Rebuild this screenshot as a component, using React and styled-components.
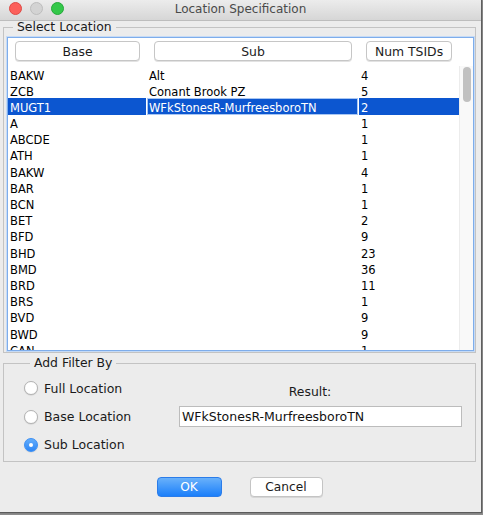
import React from "react";
import styled, { createGlobalStyle } from "styled-components";

const rows = [
  ["BAKW", "Alt", "4"],
  ["ZCB", "Conant Brook PZ", "5"],
  ["MUGT1", "WFkStonesR-MurfreesboroTN", "2"],
  ["A", "", "1"],
  ["ABCDE", "", "1"],
  ["ATH", "", "1"],
  ["BAKW", "", "4"],
  ["BAR", "", "1"],
  ["BCN", "", "1"],
  ["BET", "", "2"],
  ["BFD", "", "9"],
  ["BHD", "", "23"],
  ["BMD", "", "36"],
  ["BRD", "", "11"],
  ["BRS", "", "1"],
  ["BVD", "", "9"],
  ["BWD", "", "9"],
  ["CAN", "", "1"],
];

const options = ["Full Location", "Base Location", "Sub Location"];

const App = () => {
  return (
    <>
      <GlobalStyle />
      <Desktop>
        <Window>
          <TitleBar>
            <Lights>
              <Light color="#fc605b" edge="#de4a45" />
              <Light color="#d3d3d3" edge="#bdbdbd" />
              <Light color="#34c84a" edge="#25a83a" />
            </Lights>
            <Title>Location Specification</Title>
          </TitleBar>

          <Group>
            <Legend>Select Location</Legend>
            <TableBox>
              <HeaderRow>
                <HeadButton>Base</HeadButton>
                <HeadButton>Sub</HeadButton>
                <HeadButton>Num TSIDs</HeadButton>
              </HeaderRow>
              <Body>
                <Rows>
                  {rows.map((r, i) => (
                    <Row key={i} selected={i === 2}>
                      <Cell>{r[0]}</Cell>
                      <Cell focused={i === 2}>{r[1]}</Cell>
                      <Cell>{r[2]}</Cell>
                    </Row>
                  ))}
                </Rows>
                <ScrollTrack>
                  <Thumb />
                </ScrollTrack>
              </Body>
            </TableBox>
          </Group>

          <FilterGroup>
            <Legend>Add Filter By</Legend>
            <FilterBody>
              <Radios>
                {options.map((o) => (
                  <RadioRow key={o}>
                    <Radio checked={o === "Sub Location"} />
                    <span>{o}</span>
                  </RadioRow>
                ))}
              </Radios>
              <ResultPane>
                <ResultLabel>Result:</ResultLabel>
                <ResultField>WFkStonesR-MurfreesboroTN</ResultField>
              </ResultPane>
            </FilterBody>
          </FilterGroup>

          <Buttons>
            <OkButton>OK</OkButton>
            <CancelButton>Cancel</CancelButton>
          </Buttons>
        </Window>
      </Desktop>
    </>
  );
};

const GlobalStyle = createGlobalStyle`
  html, body {
    margin: 0;
    padding: 0;
    background: #8d8d8d;
  }
  body {
    font-family: "DejaVu Sans", "Liberation Sans", sans-serif;
    color: #000;
  }
`

const Desktop = styled.div`
  width: 483px;
  height: 515px;
  background: #8d8d8d;
  overflow: hidden;
`

const Window = styled.div`
  width: 481px;
  height: 512px;
  background: #ececec;
  border-right: 1px solid #5f5f5f;
  display: flex;
  flex-direction: column;
  box-shadow: 0 1px 1px rgba(0, 0, 0, 0.35);
`

const TitleBar = styled.div`
  height: 20px;
  border-bottom: 1px solid #bdbdbd;
  background: linear-gradient(#ececec, #d6d6d6);
  display: flex;
  align-items: center;
  justify-content: center;
  position: relative;
`

const Lights = styled.div`
  position: absolute;
  left: 9px;
  top: 2px;
  display: flex;
  gap: 8px;
`

const Light = styled.div`
  width: 11px;
  height: 11px;
  border-radius: 50%;
  background: ${(p) => p.color};
  border: 0.5px solid ${(p) => p.edge};
`

const Title = styled.div`
  font-size: 12px;
  color: #4a4a4a;
  margin-top: -2px;
`

const Group = styled.fieldset`
  margin: 0 5px 0 3px;
  padding: 4px 1px 1px 3px;
  border: 1px solid #c3c3c3;
  min-width: 0;
`

const FilterGroup = styled(Group)`
  margin-top: 4px;
  padding: 5px 13px 2px 20px;
`

const Legend = styled.legend`
  font-size: 12.4px;
  line-height: 12px;
  padding: 0 4px;
  margin-left: 6px;
  color: #1a1a1a;
`

const TableBox = styled.div`
  height: 312px;
  border: 1px solid #7eadeb;
  box-shadow: 0 0 0 1px #c6dbf6;
  background: #fff;
  display: flex;
  flex-direction: column;
  overflow: hidden;
`

const columns = "138px 211px 1fr";

const HeaderRow = styled.div`
  display: grid;
  grid-template-columns: ${columns};
  column-gap: 1px;
  height: 28px;
  padding: 3px 15px 0 0;
  box-sizing: border-box;
`

const HeadButton = styled.div`
  height: 20px;
  margin: 0 6px 0 7px;
  box-sizing: border-box;
  border: 1px solid #c6c6c6;
  border-radius: 4px;
  background: #fff;
  box-shadow: 0 1px 0 #e2e2e2;
  display: flex;
  align-items: center;
  justify-content: center;
  font-size: 12.4px;
  color: #1c1c1c;
`

const Body = styled.div`
  flex: 1;
  display: flex;
  min-height: 0;
`

const Rows = styled.div`
  flex: 1;
  overflow: hidden;
`

const Row = styled.div`
  display: grid;
  grid-template-columns: ${columns};
  column-gap: 1px;
  height: 16.2px;
  > div {
    background: ${(p) => (p.selected ? "#0c56d0" : "transparent")};
    color: ${(p) => (p.selected ? "#fff" : "#000")};
  }
`

const Cell = styled.div`
  font-size: 11.5px;
  line-height: 14.2px;
  padding: 1.5px 0 0 1px;
  box-sizing: border-box;
  height: 16.2px;
  border: 1px solid ${(p) => (p.focused ? "#a8c6f2" : "transparent")};
  white-space: nowrap;
  overflow: hidden;
`

const ScrollTrack = styled.div`
  width: 14px;
  background: #f9f9f9;
  border-left: 1px solid #ececec;
  padding: 1px 0 0 3px;
  box-sizing: border-box;
`

const Thumb = styled.div`
  width: 8px;
  height: 35px;
  border-radius: 4px;
  background: #c1c1c1;
`

const FilterBody = styled.div`
  display: grid;
  grid-template-columns: 155px 1fr;
`

const Radios = styled.div`
  display: flex;
  flex-direction: column;
`

const RadioRow = styled.div`
  height: 28.4px;
  display: flex;
  align-items: center;
  gap: 6px;
  font-size: 12.5px;
  color: #1a1a1a;
`

const Radio = styled.div`
  width: 14px;
  height: 14px;
  box-sizing: border-box;
  border-radius: 50%;
  position: relative;
  border: 1px solid ${(p) => (p.checked ? "#3a8ff5" : "#b3b3b3")};
  background: ${(p) => (p.checked ? "linear-gradient(#63adfb, #2d86f5)" : "#fff")};
  box-shadow: 0 0.5px 1px rgba(0, 0, 0, 0.15);
  &::after {
    content: "";
    display: ${(p) => (p.checked ? "block" : "none")};
    position: absolute;
    left: 4px;
    top: 4px;
    width: 4px;
    height: 4px;
    border-radius: 50%;
    background: #fff;
  }
`

const ResultPane = styled.div`
  padding-top: 10px;
  display: flex;
  flex-direction: column;
`

const ResultLabel = styled.div`
  line-height: 16px;
  font-size: 12.4px;
  text-align: center;
  padding-right: 21px;
  color: #1a1a1a;
`

const ResultField = styled.div`
  margin-top: 6px;
  height: 21px;
  box-sizing: border-box;
  border: 1px solid #bcbcbc;
  background: #fff;
  padding-left: 2px;
  font-size: 12.5px;
  line-height: 19px;
  color: #111;
`

const Buttons = styled.div`
  display: flex;
  justify-content: center;
  gap: 28px;
  margin-top: 15px;
  padding-right: 2px;
`

const OkButton = styled.div`
  width: 65px;
  height: 20px;
  box-sizing: border-box;
  border-radius: 4px;
  border: 1px solid #2b7ce9;
  background: linear-gradient(#69b1fa, #1b7ffa);
  color: #fff;
  font-size: 12.2px;
  display: flex;
  align-items: center;
  justify-content: center;
`

const CancelButton = styled(OkButton)`
  width: 73px;
  border: 1px solid #c4c4c4;
  background: #fff;
  color: #1a1a1a;
  box-shadow: 0 1px 0 #d6d6d6;
`

export default App;
